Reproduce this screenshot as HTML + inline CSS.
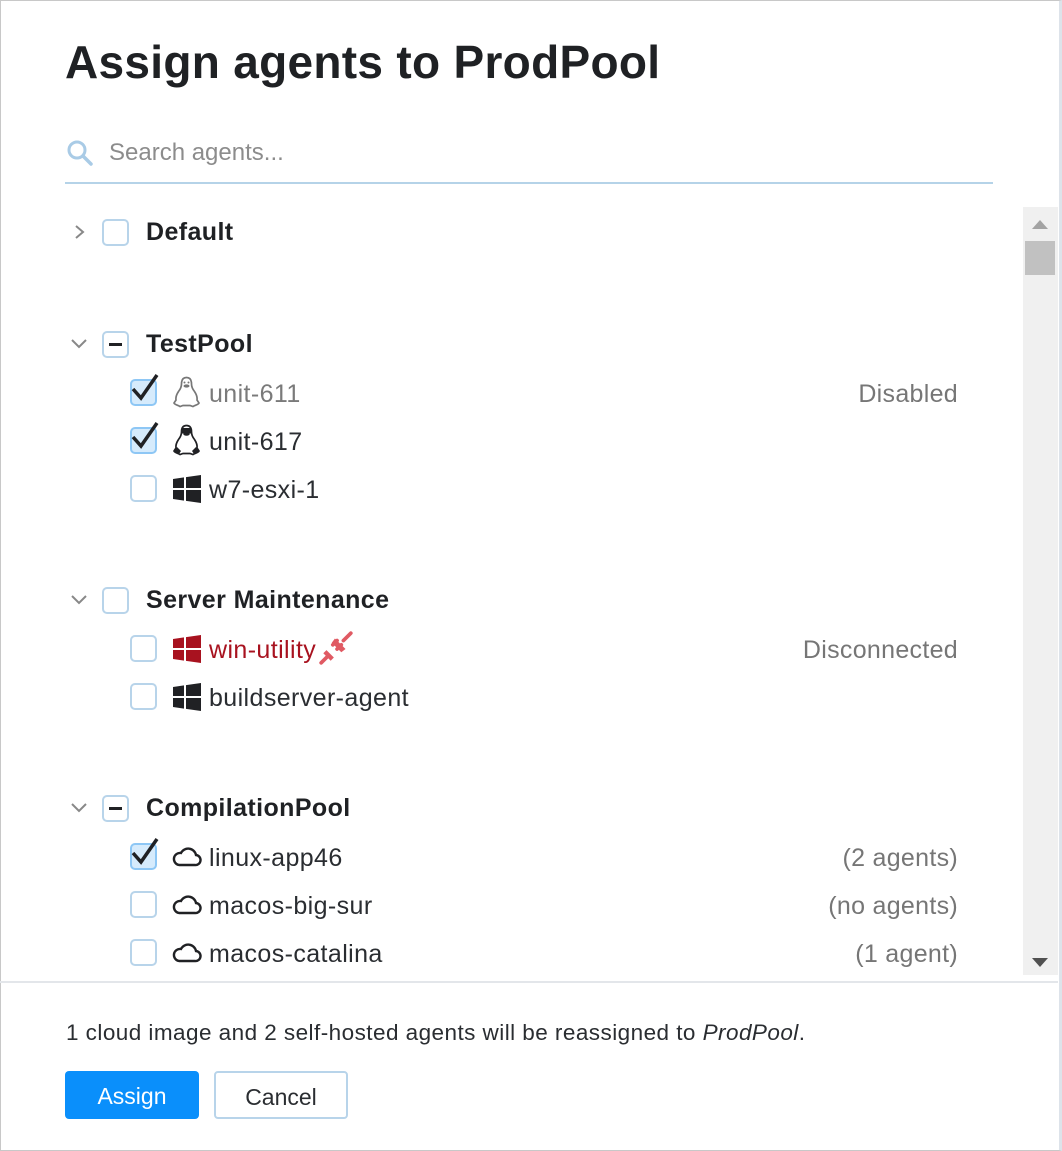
<!DOCTYPE html>
<html><head><meta charset="utf-8">
<style>
*{margin:0;padding:0;box-sizing:border-box}
body{width:1062px;height:1151px;background:#fff;font-family:"Liberation Sans","DejaVu Sans",sans-serif;color:#202124;position:relative;overflow:hidden}
.frame{position:absolute;left:0;top:0;width:1062px;height:1151px;border:1px solid #c8c8c8;border-right:3px solid #dde3ea}
.a{position:absolute;white-space:nowrap}
h1{position:absolute;left:65px;top:35px;font-size:46px;font-weight:bold;color:#1f2124;letter-spacing:0.3px}
.cb{position:absolute;width:27px;height:27px;border:2px solid #b8d4ea;border-radius:5px;background:#fff}
.cb.on{background:#d6ebfc;border-color:#8ec7f5}
.g{font-size:25px;font-weight:bold;color:#1f2124;letter-spacing:0.4px}
.t{font-size:25px;color:#2a2d31;letter-spacing:0.4px}
.r{font-size:25px;color:#767676;right:104px;letter-spacing:0.3px}
.chev{position:absolute}
</style></head><body>
<div class="frame"></div>
<h1>Assign agents to ProdPool</h1>
<svg class="a" style="left:66px;top:139px" width="28" height="28" viewBox="0 0 28 28"><circle cx="11" cy="11" r="8" fill="none" stroke="#a9cbe6" stroke-width="3"/><line x1="17" y1="17" x2="25" y2="25" stroke="#a9cbe6" stroke-width="3.5" stroke-linecap="round"/></svg>
<div class="a" style="left:109px;top:139px;font-size:24px;color:#8c8c8c">Search agents...</div>
<div class="a" style="left:65px;top:182px;width:928px;height:2px;background:#b5d3e8"></div>

<div class="a" style="left:1023px;top:207px;width:35px;height:768px;background:#f0f0f0"></div>
<svg class="a" style="left:1032px;top:220px" width="16" height="10"><polygon points="8,0 16,9 0,9" fill="#a3a3a3"/></svg>
<div class="a" style="left:1025px;top:241px;width:30px;height:34px;background:#c1c1c1"></div>
<svg class="a" style="left:1032px;top:958px" width="16" height="10"><polygon points="0,0 16,0 8,9" fill="#505050"/></svg>
<div class="a" style="left:0;top:981px;width:1058px;height:2px;background:#e3e6ea"></div>

<svg class="chev" style="left:73px;top:224px" width="14" height="16"><polyline points="3,2 10,8 3,14" fill="none" stroke="#888" stroke-width="2"/></svg>
<div class="cb" style="left:102px;top:219px"></div>
<div class="a g" style="left:146px;top:218px">Default</div>

<svg class="chev" style="left:70px;top:337px" width="18" height="14"><polyline points="2,3 9,10 16,3" fill="none" stroke="#888" stroke-width="2"/></svg>
<div class="cb" style="left:102px;top:331px"><div style="position:absolute;left:5px;top:10px;width:13px;height:3px;background:#202124"></div></div>
<div class="a g" style="left:146px;top:330px">TestPool</div>

<div class="cb on" style="left:130px;top:379px"></div>
<svg class="a" style="left:130px;top:372px" width="32" height="32"><polyline points="3,17 11,26 27,3" fill="none" stroke="#202124" stroke-width="3.5"/></svg>
<svg class="a" style="left:173px;top:376px" width="27" height="32" viewBox="0 0 27 32"><path d="M13.5 1.5c-3.5 0-5 2.5-5 6.5 0 3-1 5-3 7.5-2 3-3 5.5-2.5 8.5l-2 3c1 2 4 2 6 3.5l3-1h7l3 1c2-1.5 5-1.5 6-3.5l-2-3c.5-3-.5-5.5-2.5-8.5-2-2.5-3-4.5-3-7.5 0-4-1.5-6.5-5-6.5z" fill="none" stroke="#777" stroke-width="1.7"/><ellipse cx="13.5" cy="10" rx="3" ry="1.6" fill="#777"/><circle cx="11.5" cy="6.5" r="1" fill="#777"/><circle cx="15.5" cy="6.5" r="1" fill="#777"/></svg>
<div class="a t" style="left:209px;top:380px;color:#7a7a7a">unit-611</div>
<div class="a r" style="top:380px">Disabled</div>

<div class="cb on" style="left:130px;top:427px"></div>
<svg class="a" style="left:130px;top:420px" width="32" height="32"><polyline points="3,17 11,26 27,3" fill="none" stroke="#202124" stroke-width="3.5"/></svg>
<svg class="a" style="left:173px;top:424px" width="27" height="32" viewBox="0 0 27 32"><path d="M13.5 1.5c-3.5 0-5 2.5-5 6.5 0 3-1 5-3 7.5-2 3-3 5.5-2.5 8.5l-2 3c1 2 4 2 6 3.5l3-1h7l3 1c2-1.5 5-1.5 6-3.5l-2-3c.5-3-.5-5.5-2.5-8.5-2-2.5-3-4.5-3-7.5 0-4-1.5-6.5-5-6.5z" fill="none" stroke="#202124" stroke-width="1.7"/><path d="M8.5 4h10v5.5h-10z" fill="#202124"/><ellipse cx="13.5" cy="10" rx="3.2" ry="1.8" fill="#202124"/><path d="M1 27l3-4 4 4-2 3zM26 27l-3-4-4 4 2 3z" fill="#202124"/></svg>
<div class="a t" style="left:209px;top:428px">unit-617</div>

<div class="cb" style="left:130px;top:475px"></div>
<svg class="a" style="left:173px;top:475px" width="28" height="28" viewBox="0 0 28 28"><path d="M0 4l11-1.6V13H0zM13 2.1L28 0v13H13zM0 15h11v10.6L0 24zM13 15h15v13l-15-2.1z" fill="#202124"/></svg>
<div class="a t" style="left:209px;top:476px">w7-esxi-1</div>

<svg class="chev" style="left:70px;top:593px" width="18" height="14"><polyline points="2,3 9,10 16,3" fill="none" stroke="#888" stroke-width="2"/></svg>
<div class="cb" style="left:102px;top:587px"></div>
<div class="a g" style="left:146px;top:586px">Server Maintenance</div>

<div class="cb" style="left:130px;top:635px"></div>
<svg class="a" style="left:173px;top:635px" width="28" height="28" viewBox="0 0 28 28"><path d="M0 4l11-1.6V13H0zM13 2.1L28 0v13H13zM0 15h11v10.6L0 24zM13 15h15v13l-15-2.1z" fill="#a8121f"/></svg>
<div class="a t" style="left:209px;top:636px;color:#a8121f">win-utility</div>
<svg class="a" style="left:318px;top:630px" width="36" height="36" viewBox="0 0 34 34"><g stroke="#e05a63" stroke-width="3.5" fill="none" stroke-linecap="round"><line x1="3" y1="31" x2="10" y2="24"/><line x1="24" y1="10" x2="31" y2="3"/><line x1="14" y1="14" x2="18" y2="10"/><line x1="18" y1="18" x2="22" y2="14"/></g><path d="M8 19l7 7-3 3-7-7zM16 8l10 10-4 3-9-9z" fill="#e05a63"/></svg>
<div class="a r" style="top:636px">Disconnected</div>

<div class="cb" style="left:130px;top:683px"></div>
<svg class="a" style="left:173px;top:683px" width="28" height="28" viewBox="0 0 28 28"><path d="M0 4l11-1.6V13H0zM13 2.1L28 0v13H13zM0 15h11v10.6L0 24zM13 15h15v13l-15-2.1z" fill="#202124"/></svg>
<div class="a t" style="left:209px;top:684px">buildserver-agent</div>

<svg class="chev" style="left:70px;top:801px" width="18" height="14"><polyline points="2,3 9,10 16,3" fill="none" stroke="#888" stroke-width="2"/></svg>
<div class="cb" style="left:102px;top:795px"><div style="position:absolute;left:5px;top:10px;width:13px;height:3px;background:#202124"></div></div>
<div class="a g" style="left:146px;top:794px">CompilationPool</div>

<div class="cb on" style="left:130px;top:843px"></div>
<svg class="a" style="left:130px;top:836px" width="32" height="32"><polyline points="3,17 11,26 27,3" fill="none" stroke="#202124" stroke-width="3.5"/></svg>
<svg class="a" style="left:172px;top:845px" width="30" height="22" viewBox="0 0 30 22"><path d="M7 20h16a5 5 0 0 0 1-10 8 8 0 0 0-15-2 6 6 0 0 0-2 12z" fill="none" stroke="#202124" stroke-width="2.4"/></svg>
<div class="a t" style="left:209px;top:844px">linux-app46</div>
<div class="a r" style="top:844px">(2 agents)</div>

<div class="cb" style="left:130px;top:891px"></div>
<svg class="a" style="left:172px;top:893px" width="30" height="22" viewBox="0 0 30 22"><path d="M7 20h16a5 5 0 0 0 1-10 8 8 0 0 0-15-2 6 6 0 0 0-2 12z" fill="none" stroke="#202124" stroke-width="2.4"/></svg>
<div class="a t" style="left:209px;top:892px">macos-big-sur</div>
<div class="a r" style="top:892px">(no agents)</div>

<div class="cb" style="left:130px;top:939px"></div>
<svg class="a" style="left:172px;top:941px" width="30" height="22" viewBox="0 0 30 22"><path d="M7 20h16a5 5 0 0 0 1-10 8 8 0 0 0-15-2 6 6 0 0 0-2 12z" fill="none" stroke="#202124" stroke-width="2.4"/></svg>
<div class="a t" style="left:209px;top:940px">macos-catalina</div>
<div class="a r" style="top:940px">(1 agent)</div>

<div class="a" style="left:66px;top:1020px;font-size:22.5px;color:#2a2d31;letter-spacing:0.45px">1 cloud image and 2 self-hosted agents will be reassigned to <i>ProdPool</i>.</div>
<div class="a" style="left:65px;top:1071px;width:134px;height:48px;background:#0a8ffb;border-radius:4px;color:#fff;font-size:23px;text-align:center;line-height:50px">Assign</div>
<div class="a" style="left:214px;top:1071px;width:134px;height:48px;border:2px solid #b8d4ea;border-radius:4px;color:#2a2d31;font-size:23px;text-align:center;line-height:48px">Cancel</div>
</body></html>
